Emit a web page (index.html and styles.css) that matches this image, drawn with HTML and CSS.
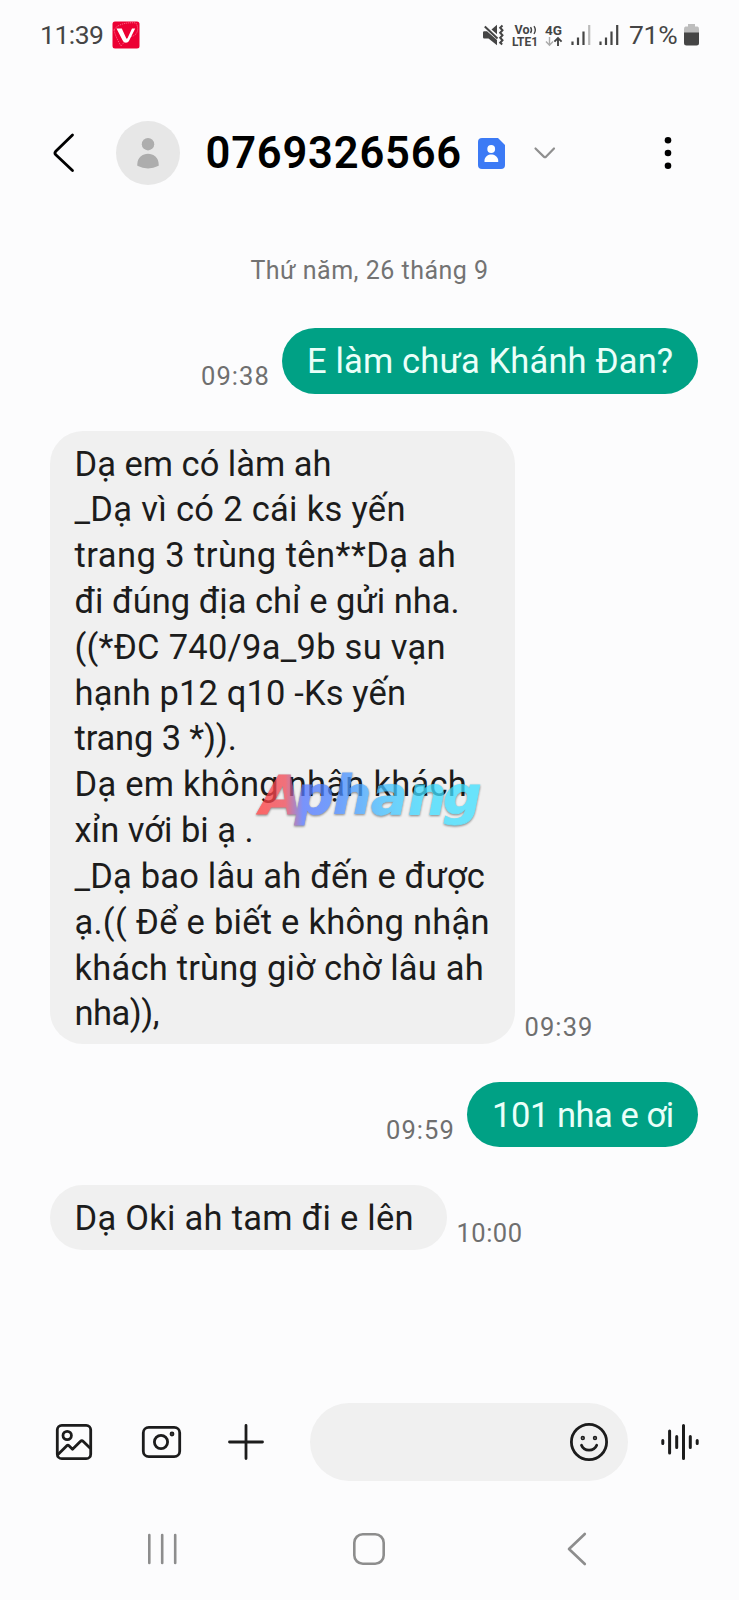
FILE: index.html
```html
<!DOCTYPE html>
<html lang="vi">
<head>
<meta charset="utf-8">
<title>0769326566</title>
<link rel="stylesheet" href="styles.css">
</head>
<body>
<div class="screen">
  <div class="status">
    <span class="clock">11:39</span>
    <svg class="app-badge" width="28" height="28" viewBox="0 0 28 28"><rect x=".5" y=".5" width="27" height="27" rx="2.5" fill="#ec0033"/><path d="M2 9C5 3 16 1 24 2c3 5 2 11-3 13-5 1-6 3-12 10C6 20 3 14 2 9z" fill="none" stroke="#ff9caf" stroke-width=".7" stroke-dasharray="1 1"/><path d="M4.5 7.500h5.300l4.300 9.500c.6 1 1 .8 1.500-.1L20 7.500h3.200l-6 12c-1.500 3-5 3-6.500 0z" fill="#fff"/></svg>
    <div class="status-right">
      <svg width="21" height="22" viewBox="0 0 21 22"><path d="M0 8.500Q0 7.300 1.200 7.300H4L14 16v5.300L5.500 14.500H1.200Q0 14.500 0 13.300zM8.500 5.500 14 .8v9.500z" fill="#454545"/><path d="M1.800 2.500 14.500 14.500" stroke="#454545" stroke-width="2"/><path d="M19.500 1.500l-2.300 2.200 2.300 2.500-2.300 2.500 2.300 2.500-2.300 2.500 2.300 2.500-2.300 2.500 2 1.800" fill="none" stroke="#454545" stroke-width="2"/></svg>
      <svg class="volte" width="27" height="23" viewBox="0 0 27 23"><text x="2.500" y="10" textLength="15" lengthAdjust="spacingAndGlyphs">Vo</text><path d="M18.500 3.200q2 2.800 0 5.800M22 2.200q2.600 3.700 0 7.800" fill="none" stroke="#454545" stroke-width="1.400"/><text x="0" y="21.500" textLength="26" lengthAdjust="spacingAndGlyphs">LTE1</text></svg>
      <svg class="net" width="18" height="23" viewBox="0 0 18 23"><text x="0" y="10.500" textLength="17" lengthAdjust="spacingAndGlyphs">4G</text><path d="M4.500 13v8M1 17.500l3.500 3.700L8 17.500" fill="none" stroke="#aaa" stroke-width="1.400"/><path d="M13 22v-8M9.400 17.600 13 14l3.600 3.600" fill="none" stroke="#454545" stroke-width="1.900"/></svg>
      <svg class="signal" width="20" height="20" viewBox="0 0 20 20"><path d="M1.500 16.500V20M7 12.500V20M12.500 6.500V20" stroke="#454545" stroke-width="2.200"/><path d="M18.200 0V20" stroke="#bbb" stroke-width="2.200"/></svg>
      <svg class="signal" width="20" height="20" viewBox="0 0 20 20"><path d="M1.500 16.500V20M7 12.500V20M12.500 6.500V20M18.200 0V20" stroke="#454545" stroke-width="2.200"/></svg>
      <span class="percent">71%</span>
      <svg class="battery" width="15" height="22" viewBox="0 0 15 22"><path d="M4 0h7v2.500h2.500Q15 2.500 15 5v5H0V5Q0 2.500 1.500 2.500H4z" fill="#bdbdbd"/><path d="M0 8.500h15V19q0 2.500-2.500 2.500h-10Q0 21.500 0 19z" fill="#454545"/></svg>
    </div>
  </div>

  <div class="header">
    <svg class="back" width="22" height="40" viewBox="0 0 22 40"><path d="M19.500 2 2.800 18.200q-1.700 1.800 0 3.600L19.500 37.500" fill="none" stroke="#000" stroke-width="2.800" stroke-linecap="round"/></svg>
    <div class="avatar"><svg width="22" height="31" viewBox="0 0 22 31"><circle cx="11" cy="6.200" r="6.200" fill="#adadad"/><path d="M.3 26.500C.3 12 21.700 12 21.700 26.500v1.300Q11 33 .3 27.800z" fill="#adadad"/></svg></div>
    <span class="number">0769326566</span>
    <svg class="contact" width="27" height="31" viewBox="0 0 27 31"><path d="M4 0h16l7 7v20q0 4-4 4H4q-4 0-4-4V4q0-4 4-4z" fill="#3c7af5"/><circle cx="13.200" cy="11" r="3.900" fill="#fff"/><path d="M6.500 24v-2c1-7.500 12.500-7.500 13.700 0v2z" fill="#fff"/></svg>
    <svg class="chevron" width="22" height="13" viewBox="0 0 22 13"><path d="M1.500 1.500 10 9.800q1 .8 2 0L20 1.500" fill="none" stroke="#8f8f8f" stroke-width="2.200" stroke-linecap="round"/></svg>
    <svg class="more" width="8" height="34" viewBox="0 0 8 34"><circle cx="4" cy="4.200" r="3.300"/><circle cx="4" cy="17" r="3.300"/><circle cx="4" cy="29.800" r="3.300"/></svg>
  </div>

  <div class="date"><span class="date-text">Thứ năm, 26 tháng 9</span></div>

  <div class="row sent first">
    <span class="time">09:38</span>
    <div class="bubble green"><span class="s1">E làm chưa Khánh Đan?</span></div>
  </div>
  <div class="row">
    <div class="bubble gray long">
      <div class="l1">Dạ em có làm ah</div>
      <div class="l2">_Dạ vì có 2 cái ks yến</div>
      <div class="l3">trang 3 trùng tên**Dạ ah</div>
      <div class="l4">đi đúng địa chỉ e gửi nha.</div>
      <div class="l5">((*ĐC 740/9a_9b su vạn</div>
      <div class="l6">hạnh p12 q10 -Ks yến</div>
      <div class="l7">trang 3 *)).</div>
      <div class="l8">Dạ em không nhận khách</div>
      <div class="l9">xỉn với bi ạ .</div>
      <div class="l10">_Dạ bao lâu ah đến e được</div>
      <div class="l11">ạ.(( Để e biết e không nhận</div>
      <div class="l12">khách trùng giờ chờ lâu ah</div>
      <div class="l13">nha)),</div>
      <svg class="watermark" width="226" height="64" viewBox="0 0 226 64">
        <defs><linearGradient id="wm" gradientUnits="userSpaceOnUse" x1="0" y1="0" x2="220" y2="0"><stop offset="0" stop-color="#ff3c3c"/><stop offset=".12" stop-color="#f04a58"/><stop offset=".2" stop-color="#5577ff"/><stop offset=".35" stop-color="#4a86ff"/><stop offset=".56" stop-color="#45bfff"/><stop offset=".75" stop-color="#3fdcff"/><stop offset="1" stop-color="#3fe0ff"/></linearGradient></defs>
        <text x="1 36 74 112 149 184" y="48">Aphang</text>
      </svg>
    </div>
    <span class="time">09:39</span>
  </div>
  <div class="row sent">
    <span class="time">09:59</span>
    <div class="bubble green short"><span class="s2">101 nha e ơi</span></div>
  </div>
  <div class="row">
    <div class="bubble gray last"><span class="s3">Dạ Oki ah tam đi e lên</span></div>
    <span class="time narrow">10:00</span>
  </div>

  <div class="composer">
    <svg width="36" height="36" viewBox="0 0 36 36" class="ink"><rect x="1.300" y="1.300" width="33.400" height="33.400" rx="4.500"/><circle cx="11.200" cy="11.500" r="4.200"/><path d="M2 30.500 10.800 21.700q1.200-1 2.200 0l3.500 3.500L24.300 17.500q1.500-1.400 3 0L34 24"/></svg>
    <svg width="39" height="32" viewBox="0 0 39 32" class="ink camera"><rect x="1.300" y="1.300" width="36.400" height="29.400" rx="5.500"/><circle cx="19" cy="16" r="6.600"/><circle cx="30" cy="8" r="1" /></svg>
    <svg width="36" height="36" viewBox="0 0 36 36" class="ink plus"><path d="M18 1.500v33M1.500 18h33"/></svg>
    <div class="field"><svg width="38" height="38" viewBox="0 0 38 38" class="ink"><circle cx="19" cy="19" r="17.600"/><circle cx="12.800" cy="15" r=".8"/><circle cx="25" cy="15" r=".8"/><path d="M11.500 22.200c2.500 6.500 12.500 6.500 15.200 0"/></svg></div>
    <svg width="38" height="38" viewBox="0 0 38 38" class="voice"><path d="M1.800 17.500v3M8.600 8v22M15.700 13.500v11M22.500 2.500v33M29.300 13.500v11M36.200 17.500v3"/></svg>
  </div>

  <div class="nav">
    <svg width="30" height="32" viewBox="0 0 30 32"><path d="M2.300 2v28M15.200 2v28M28.200 2v28"/></svg>
    <svg class="home" width="32" height="32" viewBox="0 0 32 32"><rect x="1.300" y="1.300" width="29.400" height="29.400" rx="8.500"/></svg>
    <svg class="nav-back" width="20" height="34" viewBox="0 0 20 34"><path d="M17.800 2 2 17 17.800 32"/></svg>
  </div>
</div>
</body>
</html>
```
FILE: styles.css
```css
body {
  margin: 0;
  background: #fcfcfd;
  font-family: Roboto, "Noto Sans", sans-serif;
}
.screen {
  width: 739px;
  height: 1600px;
  overflow: hidden;
  display: flex;
  flex-direction: column;
}
svg { display: block; flex: none; overflow: visible; }
.status {
  height: 70px;
  flex: none;
  display: flex;
  align-items: center;
  padding: 0 40px;
  color: #454545;
}
.clock { font-size: 26.5px; width: 72px; line-height: 30px; letter-spacing: -.5px; padding-bottom: 1px; }
.status-right { margin-left: auto; display: flex; align-items: center; height: 70px; }
.volte { margin-left: 8px; }
.net { margin-left: 6px; }
.volte text, .net text { font-size: 12.5px; font-weight: 700; fill: #454545; }
.signal { margin-left: 8px; }
.percent { margin-left: 10px; font-size: 26.5px; line-height: 30px; letter-spacing: -.3px; width: 51px; padding-bottom: 1px; }
.battery { margin-left: 4px; }

.header {
  height: 64px;
  flex: none;
  margin-top: 51px;
  padding: 0 67px 0 53px;
  display: flex;
  align-items: center;
}
.avatar {
  width: 64px;
  height: 64px;
  border-radius: 50%;
  background: #e7e7e7;
  margin-left: 41px;
  display: flex;
  align-items: center;
  justify-content: center;
}
.number { margin-left: 25.500px; width: 256.500px; font-size: 43.5px; line-height: 50px; padding-top: 2px; font-weight: 600; color: #000; letter-spacing: .8px; }
.contact { margin-left: 16px; }
.chevron { margin-left: 29px; }
.more { margin-left: auto; }

.date { height: 40px; margin-top: 66px; flex: none; text-align: center; line-height: 40px; font-size: 25px; color: #737373; letter-spacing: .5px; }
.row { display: flex; align-items: flex-end; gap: 10px; padding: 0 41px 0 49.5px; margin-top: 37.500px; flex: none; }
.row.first { margin-top: 37px; }
.sent { justify-content: flex-end; gap: 12px; }
.time { font-size: 25.5px; line-height: 30px; color: #6f6f6f; letter-spacing: 1.1px; margin-bottom: 2.500px; }
.time.narrow { letter-spacing: .5px; }
.bubble {
  box-sizing: border-box;
  position: relative;
  height: 65.500px;
  border-radius: 33px;
  padding: 11px 25px 0;
  font-size: 34.5px;
  line-height: 45.830px;
  white-space: nowrap;
}
.green { width: 416px; background: #00a185; color: #eafff9; }
.green.short { width: 231px; }
.gray { background: #f0f0f0; color: #1c1c1c; }
.gray.long { width: 465px; height: 613px; padding-top: 10.500px; }
.gray.last { width: 397px; }

/* Letter spacing per line of message text */
.l2 { letter-spacing: .3px; }
.l3 { letter-spacing: .44px; }
.l5 { letter-spacing: .25px; }
.l6 { letter-spacing: .13px; }
.l7 { letter-spacing: -.15px; }
.l8 { letter-spacing: .25px; }
.l10 { letter-spacing: .18px; }
.l11 { letter-spacing: .25px; }
.l12 { letter-spacing: .22px; }
.l13 { letter-spacing: -.5px; }
.s1 { letter-spacing: .15px; }
.s2 { letter-spacing: -.45px; }
.s3 { letter-spacing: .27px; }

.watermark { position: absolute; left: 209.500px; top: 334.500px; opacity: .76; filter: drop-shadow(0 1.5px .8px rgba(0,0,0,.6)); }
.watermark text { font: italic 700 54px "DejaVu Sans", sans-serif; fill: url(#wm); stroke: url(#wm); stroke-width: .8; }

.composer { display: flex; align-items: center; height: 78px; margin-top: 153px; padding: 0 40px 0 56px; flex: none; }
.ink { fill: none; stroke: #1c1c1c; stroke-width: 2.800; stroke-linecap: round; stroke-linejoin: round; }
.camera { margin-left: 49.500px; }
.plus { margin-left: 47.500px; }
.field { margin-left: 46px; width: 318px; height: 78px; box-sizing: border-box; border-radius: 39px; background: #f0f0f0; display: flex; align-items: center; justify-content: flex-end; padding-right: 20px; }
.voice { margin-left: auto; fill: none; stroke: #1c1c1c; stroke-width: 3; stroke-linecap: round; }
.nav { display: flex; align-items: center; margin-top: 50px; height: 36px; padding-left: 147px; flex: none; }
.nav svg { fill: none; stroke: #8d8d8d; stroke-width: 2.600; stroke-linecap: round; stroke-linejoin: round; }
.home { margin-left: 175.500px; }
.nav-back { margin-left: 182px; }
```
